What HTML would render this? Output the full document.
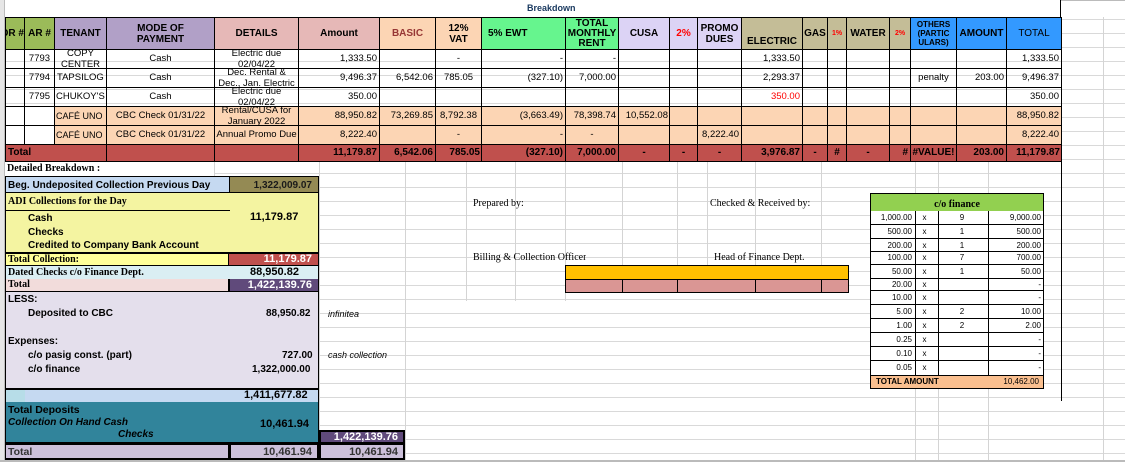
<!DOCTYPE html>
<html><head><meta charset="utf-8"><style>
*{margin:0;padding:0;box-sizing:border-box}
body{width:1125px;height:462px;overflow:hidden;background:#fff;position:relative;font-family:"Liberation Sans",sans-serif;font-size:10px;color:#000}
.grid{position:absolute;left:0;top:0;width:1125px;height:462px;
background-image:repeating-linear-gradient(to bottom,transparent 0 13px,#d9d9d9 13px 14px);background-position:0 6px}
.vl{position:absolute;width:1px;background:#d4d4d4}
.gut{position:absolute;left:0;top:0;width:5px;height:462px;background:#e6e6e6;border-right:1px solid #bcbcbc}
table{position:absolute;left:5px;top:17px;border-collapse:collapse;table-layout:fixed;width:1056px}
td{border:1px solid #000;overflow:hidden;white-space:nowrap;padding:0;font-size:9.5px;line-height:10px}
td>div{overflow:hidden}
tr.h td>div{height:31px;display:flex;align-items:center;justify-content:center;text-align:center;white-space:normal;font-weight:bold;font-size:10px;line-height:11px}
tr.d td>div{height:18px;line-height:18px;padding:0 2px}
tr.d td>div.m{line-height:11px;white-space:normal;text-align:center;margin-top:-2px;height:20px}
tr.p td{background:#fcd5b4}
tr.t td{background:#c0504d;font-weight:bold;font-size:10px}
tr.t td>div{height:16px;line-height:16px;padding:0 2px}
.r{text-align:right}.c{text-align:center}
.a{position:absolute;box-sizing:border-box;overflow:hidden;white-space:nowrap}
.s{font-family:"Liberation Serif",serif;font-weight:bold}
.b{font-weight:bold}
</style></head><body>
<div class="grid"></div>
<div class="vl" style="left:214px;top:161px;height:300px"></div>
<div class="vl" style="left:319px;top:161px;height:300px"></div>
<div class="vl" style="left:405px;top:161px;height:300px"></div>
<div class="vl" style="left:466px;top:161px;height:140px"></div>
<div class="vl" style="left:515px;top:161px;height:140px"></div>
<div class="vl" style="left:565px;top:161px;height:140px"></div>
<div class="vl" style="left:622px;top:161px;height:110px"></div>
<div class="vl" style="left:677px;top:161px;height:110px"></div>
<div class="vl" style="left:707px;top:161px;height:110px"></div>
<div class="vl" style="left:755px;top:161px;height:110px"></div>
<div class="vl" style="left:821px;top:161px;height:110px"></div>
<div class="vl" style="left:915px;top:161px;height:300px"></div>
<div class="vl" style="left:938px;top:161px;height:300px"></div>
<div class="vl" style="left:988px;top:161px;height:300px"></div>
<div class="vl" style="left:1103px;top:0;height:462px"></div>
<div class="gut"></div>
<div class="a" style="left:5px;top:0;width:1056px;height:18px;background:#fff;border-bottom:1px solid #000;border-right:1px solid #000"></div>
<div class="a b" style="left:527px;top:3px;font-size:9px;color:#17375e">Breakdown</div>
<div class="a" style="left:1061px;top:0;width:64px;height:17px;background:#fff;border-top:1px solid #bbb"></div>

<table>
<colgroup><col style="width:19px"><col style="width:30px"><col style="width:52px"><col style="width:108px"><col style="width:84px"><col style="width:81px"><col style="width:56px"><col style="width:46px"><col style="width:84px"><col style="width:53px"><col style="width:51px"><col style="width:28px"><col style="width:44px"><col style="width:61px"><col style="width:25px"><col style="width:19px"><col style="width:43px"><col style="width:21px"><col style="width:46px"><col style="width:50px"><col style="width:55px"></colgroup>
<tr class="h">
<td style="background:#9bbb59"><div style="white-space:nowrap;justify-content:flex-end">OR #</div></td>
<td style="background:#9bbb59"><div style="white-space:nowrap">AR #</div></td>
<td style="background:#b1a0c7"><div>TENANT</div></td>
<td style="background:#b1a0c7"><div>MODE OF<br>PAYMENT</div></td>
<td style="background:#e6b8b7"><div>DETAILS</div></td>
<td style="background:#e6b8b7"><div>Amount</div></td>
<td style="background:#fcd5b4;color:#963634"><div>BASIC</div></td>
<td style="background:#fcd5b4"><div>12%<br>VAT</div></td>
<td style="background:#66f58e"><div style="justify-content:flex-start;padding-left:6px">5% EWT</div></td>
<td style="background:#66f58e"><div style="line-height:10px">TOTAL MONTHLY RENT</div></td>
<td style="background:#dcd3f5"><div>CUSA</div></td>
<td style="background:#dcd3f5;color:#f00"><div>2%</div></td>
<td style="background:#dcd3f5"><div>PROMO DUES</div></td>
<td style="background:#c4bd97"><div style="align-items:flex-end;padding-bottom:2px">ELECTRIC</div></td>
<td style="background:#c4bd97"><div>GAS</div></td>
<td style="background:#c4bd97;color:#f00"><div style="font-size:7px">1%</div></td>
<td style="background:#c4bd97"><div>WATER</div></td>
<td style="background:#c4bd97;color:#f00"><div style="font-size:7px">2%</div></td>
<td style="background:#3399ff"><div style="font-size:8px;line-height:9px">OTHERS (PARTIC ULARS)</div></td>
<td style="background:#3399ff"><div style="white-space:nowrap">AMOUNT</div></td>
<td style="background:#3399ff"><div style="font-weight:normal">TOTAL</div></td>
</tr>
<tr class="d"><td></td><td><div class="c">7793</div></td><td><div class="m">COPY CENTER</div></td><td><div class="c">Cash</div></td><td><div class="m">Electric due 02/04/22</div></td><td><div class="r">1,333.50</div></td><td></td><td><div class="c">-</div></td><td><div class="r">-</div></td><td><div class="r">-</div></td><td></td><td></td><td></td><td><div class="r">1,333.50</div></td><td></td><td></td><td></td><td></td><td></td><td></td><td><div class="r">1,333.50</div></td></tr>
<tr class="d"><td></td><td><div class="c">7794</div></td><td><div>TAPSILOG</div></td><td><div class="c">Cash</div></td><td><div class="m">Dec. Rental &amp; Dec., Jan. Electric</div></td><td><div class="r">9,496.37</div></td><td><div class="r">6,542.06</div></td><td><div class="c">785.05</div></td><td><div class="r">(327.10)</div></td><td><div class="r">7,000.00</div></td><td></td><td></td><td></td><td><div class="r">2,293.37</div></td><td></td><td></td><td></td><td></td><td><div class="c">penalty</div></td><td><div class="r">203.00</div></td><td><div class="r">9,496.37</div></td></tr>
<tr class="d"><td></td><td><div class="c">7795</div></td><td><div style="padding:0 1px">CHUKOY'S</div></td><td><div class="c">Cash</div></td><td><div class="m">Electric due 02/04/22</div></td><td><div class="r">350.00</div></td><td></td><td></td><td></td><td></td><td></td><td></td><td></td><td><div class="r" style="color:#f00">350.00</div></td><td></td><td></td><td></td><td></td><td></td><td></td><td><div class="r">350.00</div></td></tr>
<tr class="d p"><td style="background:#fff"></td><td style="background:#fff"></td><td><div style="padding:0 1px;font-size:9px">CAFÉ UNO</div></td><td><div class="c">CBC Check 01/31/22</div></td><td><div class="m">Rental/CUSA for January 2022</div></td><td><div class="r">88,950.82</div></td><td><div class="r">73,269.85</div></td><td><div class="c" style="padding:0">8,792.38</div></td><td><div class="r">(3,663.49)</div></td><td><div class="r">78,398.74</div></td><td><div class="r" style="padding:0 1px">10,552.08</div></td><td></td><td></td><td></td><td></td><td></td><td></td><td></td><td></td><td></td><td><div class="r">88,950.82</div></td></tr>
<tr class="d p"><td style="background:#fff"></td><td style="background:#fff"></td><td><div style="padding:0 1px;font-size:9px">CAFÉ UNO</div></td><td><div class="c">CBC Check 01/31/22</div></td><td><div class="c" style="padding:0">Annual Promo Due</div></td><td><div class="r">8,222.40</div></td><td></td><td><div class="c">-</div></td><td><div class="r">-</div></td><td><div class="c">-</div></td><td></td><td></td><td><div class="r">8,222.40</div></td><td></td><td></td><td></td><td></td><td></td><td></td><td></td><td><div class="r">8,222.40</div></td></tr>
<tr class="t"><td colspan="3"><div>Total</div></td><td></td><td></td><td><div class="r">11,179.87</div></td><td><div class="r">6,542.06</div></td><td><div class="r" style="padding:0 1px">785.05</div></td><td><div class="r">(327.10)</div></td><td><div class="r">7,000.00</div></td><td><div class="c">-</div></td><td><div class="c">-</div></td><td><div class="c">-</div></td><td><div class="r">3,976.87</div></td><td><div class="c">-</div></td><td><div class="c">#</div></td><td><div class="c">-</div></td><td><div class="r">#</div></td><td><div class="c" style="padding:0">#VALUE!</div></td><td><div class="r">203.00</div></td><td><div class="r" style="padding:0 1px">11,179.87</div></td></tr>
</table>

<div class="a s" style="left:5px;top:162px;width:209px;height:14px;background:#fff;font-size:10px;padding:1px 2px">Detailed Breakdown :</div>
<div class="a b" style="left:5px;top:176px;width:224px;height:17px;background:#c5d9f1;border:1px solid #000;border-right:none;font-size:10px;padding:3px 2px">Beg. Undeposited Collection Previous Day</div>
<div class="a b" style="left:229px;top:176px;width:90px;height:17px;background:#948a54;border:1px solid #000;font-size:10px;text-align:right;padding:3px 6px 0 0;color:#1a1a1a">1,322,009.07</div>
<div class="a" style="left:5px;top:193px;width:314px;height:60px;background:#f4f4a1;border:1px solid #000;border-top:none"></div>
<div class="a" style="left:5px;top:210px;width:225px;height:1px;background:#000"></div>
<div class="a s" style="left:8px;top:196px;font-size:10px">ADI Collections for the Day</div>
<div class="a b" style="left:28px;top:213px;font-size:10px">Cash</div>
<div class="a b" style="left:28px;top:227px;font-size:10px">Checks</div>
<div class="a b" style="left:28px;top:240px;font-size:10px">Credited to Company Bank Account</div>
<div class="a b" style="left:250px;top:211px;font-size:11px">11,179.87</div>
<div class="a s" style="left:5px;top:253px;width:224px;height:13px;background:#ffff99;border:1px solid #000;font-size:10px;padding:0 2px;line-height:11px">Total Collection:</div>
<div class="a b" style="left:229px;top:253px;width:90px;height:13px;background:#c0504d;border:1px solid #000;border-left:none;color:#fff;font-size:11px;text-align:right;padding-right:6px;line-height:11px">11,179.87</div>
<div class="a s" style="left:5px;top:266px;width:314px;height:14px;background:#daeef3;border:1px solid #000;border-top:none;font-size:10px;padding:1px 2px;line-height:12px">Dated Checks c/o Finance Dept.</div>
<div class="a b" style="left:250px;top:266px;font-size:11px;line-height:13px">88,950.82</div>
<div class="a s" style="left:5px;top:279px;width:224px;height:13px;background:#f2dcdb;border:1px solid #000;border-top:none;font-size:10px;padding:0 2px;line-height:11px">Total</div>
<div class="a b" style="left:229px;top:279px;width:90px;height:13px;background:#604a7b;border:1px solid #000;border-top:none;color:#fff;font-size:11px;text-align:right;padding-right:6px;line-height:12px">1,422,139.76</div>
<div class="a" style="left:5px;top:292px;width:314px;height:97px;background:#e4dfec;border-left:1px solid #000;border-right:1px solid #000"></div>
<div class="a b" style="left:8px;top:294px;font-size:10px">LESS:</div>
<div class="a b" style="left:28px;top:308px;font-size:10px">Deposited to CBC</div>
<div class="a b" style="left:266px;top:308px;font-size:10px">88,950.82</div>
<div class="a" style="left:328px;top:309px;font-size:9px;font-style:italic">infinitea</div>
<div class="a b" style="left:8px;top:336px;font-size:10px">Expenses:</div>
<div class="a b" style="left:28px;top:350px;font-size:10px">c/o pasig const. (part)</div>
<div class="a b" style="left:282px;top:350px;font-size:10px">727.00</div>
<div class="a" style="left:328px;top:350px;font-size:9px;font-style:italic">cash collection</div>
<div class="a b" style="left:28px;top:364px;font-size:10px">c/o finance</div>
<div class="a b" style="left:252px;top:364px;font-size:10px">1,322,000.00</div>
<div class="a" style="left:5px;top:388px;width:314px;height:15px;background:#c5d9f1;border:1px solid #000;border-width:2px 1px 1px 1px"></div>
<div class="a" style="left:6px;top:390px;width:19px;height:12px;background:#b7dde8"></div>
<div class="a b" style="left:244px;top:389px;font-size:11px">1,411,677.82</div>
<div class="a" style="left:5px;top:402px;width:314px;height:41px;background:#31849b;border:1px solid #000;border-top:none"></div>
<div class="a b" style="left:8px;top:404px;font-size:10.5px">Total Deposits</div>
<div class="a b" style="left:8px;top:417px;font-size:10px;font-style:italic">Collection On Hand Cash</div>
<div class="a b" style="left:118px;top:429px;font-size:10px;font-style:italic">Checks</div>
<div class="a b" style="left:260px;top:418px;font-size:11px">10,461.94</div>
<div class="a b" style="left:319px;top:430px;width:86px;height:14px;background:#604a7b;border:2px solid #000;color:#fff;font-size:11px;text-align:right;padding-right:5px;line-height:11px">1,422,139.76</div>
<div class="a b" style="left:5px;top:443px;width:225px;height:17px;background:#ccc0da;border:2px solid #000;border-left:1px solid #000;font-size:10.5px;padding:1px 2px;color:#333">Total</div>
<div class="a b" style="left:229px;top:443px;width:90px;height:17px;background:#ccc0da;border:2px solid #000;font-size:11px;text-align:right;padding:1px 5px 0 0;color:#333">10,461.94</div>
<div class="a b" style="left:319px;top:443px;width:86px;height:17px;background:#ccc0da;border:2px solid #000;font-size:11px;text-align:right;padding:1px 5px 0 0;color:#333">10,461.94</div>
<div class="a" style="left:0;top:460px;width:1125px;height:2px;background:#bbb"></div>

<div class="a" style="left:473px;top:198px;font-family:'Liberation Serif',serif;font-size:10px">Prepared by:</div>
<div class="a" style="left:710px;top:198px;font-family:'Liberation Serif',serif;font-size:10px">Checked &amp; Received by:</div>
<div class="a" style="left:473px;top:252px;font-family:'Liberation Serif',serif;font-size:10px">Billing &amp; Collection Officer</div>
<div class="a" style="left:714px;top:252px;font-family:'Liberation Serif',serif;font-size:10px">Head of Finance Dept.</div>
<div class="a" style="left:565px;top:265px;width:284px;height:15px;background:#ffc000;border:1px solid #000"></div>
<div class="a" style="left:565px;top:279px;width:284px;height:14px;background:#da9694;border:1px solid #000"></div>
<div class="a" style="left:622px;top:279px;width:1px;height:14px;background:#000"></div>
<div class="a" style="left:677px;top:279px;width:1px;height:14px;background:#000"></div>
<div class="a" style="left:755px;top:279px;width:1px;height:14px;background:#000"></div>
<div class="a" style="left:821px;top:279px;width:1px;height:14px;background:#000"></div>
<div class="a" style="left:1061px;top:161px;width:1px;height:240px;background:#000"></div>

<div class="a s" style="left:870px;top:193px;width:174px;height:19px;background:#92d050;border:1px solid #000;text-align:center;font-size:10px;padding-top:5px">c/o finance</div>
<div class="a" style="left:870px;top:211px;width:174px;height:165px;background:#fff;border:1px solid #000;border-top:none">
<div style="position:absolute;left:44px;top:0;width:1px;height:165px;background:#000"></div>
<div style="position:absolute;left:67px;top:0;width:1px;height:165px;background:#000"></div>
<div style="position:absolute;left:117px;top:0;width:1px;height:165px;background:#000"></div>
</div>
<div class="a" style="left:870px;top:211px;width:174px;font-size:8px;line-height:13px">
<div style="display:flex;border-bottom:1px solid #000;height:14px"><span style="width:42px;text-align:right">1,000.00</span><span style="width:25px;text-align:center">x</span><span style="width:50px;text-align:center">9</span><span style="width:54px;text-align:right">9,000.00</span></div>
<div style="display:flex;border-bottom:1px solid #000;height:14px"><span style="width:42px;text-align:right">500.00</span><span style="width:25px;text-align:center">x</span><span style="width:50px;text-align:center">1</span><span style="width:54px;text-align:right">500.00</span></div>
<div style="display:flex;border-bottom:1px solid #000;height:13px;padding-top:1px;line-height:12px"><span style="width:42px;text-align:right">200.00</span><span style="width:25px;text-align:center">x</span><span style="width:50px;text-align:center">1</span><span style="width:54px;text-align:right">200.00</span></div>
<div style="display:flex;border-bottom:1px solid #000;height:13px;line-height:11px"><span style="width:42px;text-align:right">100.00</span><span style="width:25px;text-align:center">x</span><span style="width:50px;text-align:center">7</span><span style="width:54px;text-align:right">700.00</span></div>
<div style="display:flex;border-bottom:1px solid #000;height:14px"><span style="width:42px;text-align:right">50.00</span><span style="width:25px;text-align:center">x</span><span style="width:50px;text-align:center">1</span><span style="width:54px;text-align:right">50.00</span></div>
<div style="display:flex;border-bottom:1px solid #000;height:12px;line-height:11px"><span style="width:42px;text-align:right">20.00</span><span style="width:25px;text-align:center">x</span><span style="width:50px"></span><span style="width:54px;text-align:right">-</span></div>
<div style="display:flex;border-bottom:1px solid #000;height:14px"><span style="width:42px;text-align:right">10.00</span><span style="width:25px;text-align:center">x</span><span style="width:50px"></span><span style="width:54px;text-align:right">-</span></div>
<div style="display:flex;border-bottom:1px solid #000;height:14px"><span style="width:42px;text-align:right">5.00</span><span style="width:25px;text-align:center">x</span><span style="width:50px;text-align:center">2</span><span style="width:54px;text-align:right">10.00</span></div>
<div style="display:flex;border-bottom:1px solid #000;height:14px"><span style="width:42px;text-align:right">1.00</span><span style="width:25px;text-align:center">x</span><span style="width:50px;text-align:center">2</span><span style="width:54px;text-align:right">2.00</span></div>
<div style="display:flex;border-bottom:1px solid #000;height:14px"><span style="width:42px;text-align:right">0.25</span><span style="width:25px;text-align:center">x</span><span style="width:50px"></span><span style="width:54px;text-align:right">-</span></div>
<div style="display:flex;border-bottom:1px solid #000;height:14px"><span style="width:42px;text-align:right">0.10</span><span style="width:25px;text-align:center">x</span><span style="width:50px"></span><span style="width:54px;text-align:right">-</span></div>
<div style="display:flex;height:14px"><span style="width:42px;text-align:right">0.05</span><span style="width:25px;text-align:center">x</span><span style="width:50px"></span><span style="width:54px;text-align:right">-</span></div>
</div>
<div class="a" style="left:870px;top:375px;width:174px;height:14px;background:#fabf8f;border:1px solid #000;font-size:8px;line-height:12px">
<span class="b" style="position:absolute;left:5px">TOTAL AMOUNT</span><span style="position:absolute;right:4px">10,462.00</span></div>
</body></html>
